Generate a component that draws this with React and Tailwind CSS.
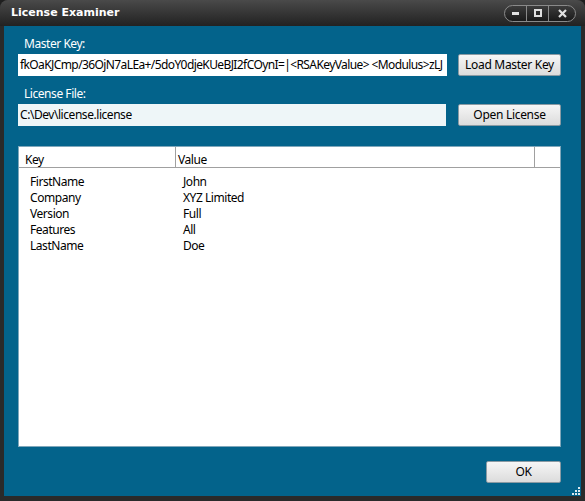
import { useState } from 'react'

const rows = [
  ['FirstName', 'John'],
  ['Company', 'XYZ Limited'],
  ['Version', 'Full'],
  ['Features', 'All'],
  ['LastName', 'Doe'],
]

const font = { fontFamily: '"Noto Sans", "Open Sans", sans-serif' }

function Button({ children, className = '' }) {
  return (
    <button
      className={`h-[22px] rounded-[2px] border border-[#8a9aa3] bg-gradient-to-b from-[#f6f6f6] to-[#dcdcdc] text-[12px] text-black leading-none tracking-[-0.3px] ${className}`}
    >
      {children}
    </button>
  )
}

export default function App() {
  const [masterKey] = useState(
    'fkOaKJCmp/36OjN7aLEa+/5doY0djeKUeBJI2fCOynI=|<RSAKeyValue> <Modulus>zLJ'
  )
  const [licensePath] = useState('C:\\Dev\\license.license')

  return (
    <div className="w-[585px] h-[501px] bg-[#1f1f1f] text-[12px] tracking-[-0.45px]" style={font}>
      <div className="flex h-full flex-col rounded-t-[8px] bg-[#2a2a2a]">
        {/* Title bar */}
        <div className="flex h-[26px] items-center justify-between rounded-t-[8px] bg-gradient-to-b from-[#4a4a4a] to-[#222] pl-[11px] pr-[9px]">
          <span className="font-bold text-white tracking-normal" style={{ fontFamily: '"DejaVu Sans", sans-serif', fontSize: 11 }}>
            License Examiner
          </span>
          <div className="flex h-[17px] items-stretch overflow-hidden rounded-full border border-[#8a8a8a] bg-gradient-to-b from-[#3c3c3c] to-[#1a1a1a]">
            <div className="flex w-[22px] items-center justify-center border-r border-[#8a8a8a]">
              <div className="h-[3px] w-[7px] bg-[#e0e0e0]" />
            </div>
            <div className="flex w-[22px] items-center justify-center border-r border-[#8a8a8a]">
              <div className="h-[8px] w-[8px] border-[2px] border-[#e0e0e0]" />
            </div>
            <div className="flex w-[26px] items-center justify-center">
              <svg width="9" height="9" viewBox="0 0 9 9">
                <path d="M1 1 L8 8 M8 1 L1 8" stroke="#e0e0e0" strokeWidth="2.2" />
              </svg>
            </div>
          </div>
        </div>

        {/* Body */}
        <div className="relative mx-[4px] mb-[5px] flex flex-1 flex-col bg-[#03638b] px-[14px] pt-[10px]">
          <div className="pl-[6px] text-white leading-[16px]">Master Key:</div>
          <div className="mt-[2px] flex items-center gap-[11px]">
            <div className="h-[22px] w-[429px] overflow-hidden whitespace-nowrap bg-white pl-[2px] leading-[22px] tracking-[-0.6px] text-black">
              {masterKey}
            </div>
            <Button className="w-[103px]">Load Master Key</Button>
          </div>

          <div className="mt-[10px] pl-[6px] text-white leading-[16px]">License File:</div>
          <div className="mt-[2px] flex items-center gap-[12px]">
            <div className="h-[22px] w-[428px] overflow-hidden whitespace-nowrap bg-[#eef6f8] pl-[2px] leading-[22px] text-black">
              {licensePath}
            </div>
            <Button className="w-[103px]">Open License</Button>
          </div>

          {/* List view */}
          <div className="mt-[20px] h-[301px] w-[543px] border border-[#7fa7bb] bg-white">
            <div className="flex h-[21px] border-b border-[#a0a0a0] text-black leading-[16px]">
              <div className="w-[157px] border-r border-[#a0a0a0] pl-[6px] pt-[5px]">Key</div>
              <div className="w-[359px] border-r border-[#a0a0a0] pl-[2px] pt-[5px]">Value</div>
            </div>
            <div className="pt-[6px]">
              {rows.map(([k, v]) => (
                <div key={k} className="flex h-[16px] items-center text-black">
                  <div className="w-[164px] pl-[11px]">{k}</div>
                  <div>{v}</div>
                </div>
              ))}
            </div>
          </div>

          <div className="mt-[14px] flex justify-end pr-[6px]">
            <Button className="w-[75px]">OK</Button>
          </div>

          {/* resize grip */}
          <svg className="absolute bottom-[1px] right-[1px]" width="10" height="10" viewBox="0 0 10 10">
            {[[8, 2], [8, 5], [5, 5], [8, 8], [5, 8], [2, 8]].map(([x, y]) => (
              <rect key={`${x}-${y}`} x={x} y={y} width="2" height="2" fill="#dce8ee" />
            ))}
          </svg>
        </div>
      </div>
    </div>
  )
}
